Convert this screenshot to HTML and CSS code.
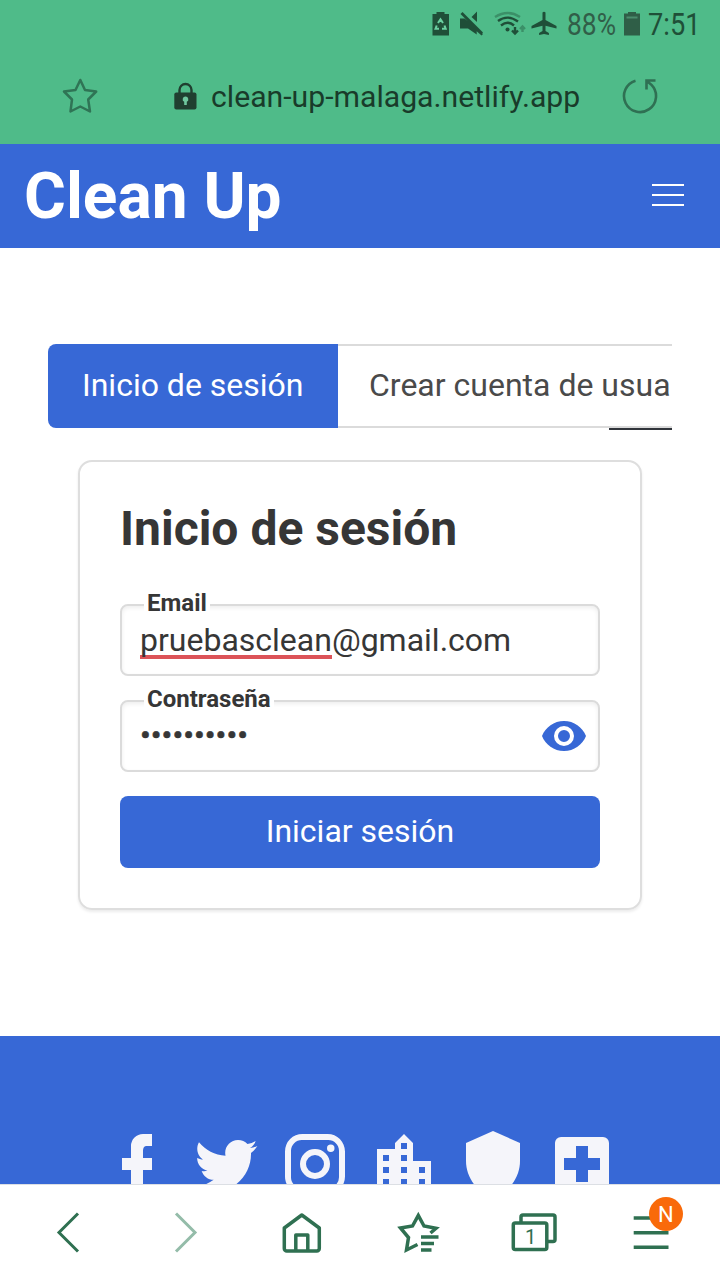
FILE: index.html
```html
<!DOCTYPE html>
<html lang="es">
<head>
<meta charset="utf-8">
<title>Clean Up</title>
<link rel="stylesheet" href="styles.css">
</head>
<body>
<div class="screen">
  <div class="browser-top">
    <div class="status">
      <svg width="288" height="48" viewBox="432 0 288 48">
        <g fill="#1f4f38">
          <path d="M436.500 12h8v2h4.500v21.500h-16.500V14h4z"/>
          <path d="M460 18.500h4.500L483 34l-1.500 1.500-4.800-4.200V34.500L468 28.500h-8zM462.500 12l20.500 20.500-2 2L460.500 14zM477 11.500v10.500l-5.500-5z"/>
          <path d="M542.500 12.500q1.500-1.500 3 0V20L556.500 26v2.500l-11-2.700V31l3.400 2v2l-4.900-1-4.900 1v-2l3.400-2v-5.200l-11 2.700V26l11-6z"/>
          <circle cx="507.500" cy="29.500" r="2"/>
        </g>
        <g fill="none" stroke="#6bd0a1" stroke-width="2"><path d="M438 23l2.500-3.800 2.500 3.800M436.700 25.500l-1.200 3.300h3.500M444.500 25.500l1.200 3.300H442"/></g>
        <g fill="none" stroke="#1f4f38" stroke-width="2.400"><path d="M501 25.500q7-5.500 13 0M498 21q9.500-7 20 .5M515 27v6M512 30.500l3 3 3-3"/><path d="M495 17q13-8 25 0M522.500 32v-5M520 29l2.500-2.500L525 29" opacity=".4"/></g>
        <text x="567" y="35" font-size="30.500" textLength="49" lengthAdjust="spacingAndGlyphs" fill="#315e48">88%</text>
        <path d="M628 12h8v1.500h4V35.500h-16V13.500h4z" fill="#2f5e47"/>
        <path d="M626.500 17.500h11" stroke="#4b8c6d" stroke-width="2"/>
        <text x="648" y="35" font-size="31" textLength="52.500" lengthAdjust="spacingAndGlyphs" fill="#1f4f38">7:51</text>
      </svg>
    </div>
    <div class="address">
      <svg class="star" width="36" height="36" viewBox="0 0 36 36"><path d="M18.300 2l4.700 10 11.200 1.500-8 8L28 33.500 18.300 28.500 8.500 33.500l1.500-12-8-8L13.500 12z" fill="none" stroke="#2f7455" stroke-width="2.500" stroke-linejoin="round"/></svg>
      <svg class="lock" width="23" height="28" viewBox="0 0 23 28"><path d="M5.500 12V8a6 6 0 0112 0v4" fill="none" stroke="#203f30" stroke-width="2.400"/><rect x=".3" y="10.500" width="22.200" height="17" rx="2" fill="#203f30"/><path d="M11.500 14.500a2.800 2.800 0 011.300 5.300V23h-2.600v-3.200a2.800 2.800 0 011.300-5.300z" fill="#6fc79e"/></svg>
      <span class="url">clean-up-malaga.netlify.app</span>
      <svg class="reload" width="36" height="36" viewBox="0 0 36 36"><path d="M13.500 2.700A16 16 0 1029.500 6.900Q27.500 5 24.500 3M24.500 11.500V2.500H33.500" fill="none" stroke="#2f7053" stroke-width="2.600"/></svg>
    </div>
  </div>
  <header class="navbar">
    <span class="brand">Clean Up</span>
    <div class="burger"><i></i><i></i><i></i></div>
  </header>
  <main class="content">
    <div class="tabs">
      <div class="tab active">Inicio de sesión</div>
      <div class="tab other">Crear cuenta de usua</div>
    </div>
    <form class="card">
      <h1>Inicio de sesión</h1>
      <div class="field"><label>Email</label><span class="value"><span class="misspelled">pruebasclean</span>@gmail.com</span></div>
      <div class="field"><label>Contraseña</label><span class="value dots">••••••••••</span>
        <svg class="eye" width="48" height="48" viewBox="0 0 24 24"><path fill="#3768d6" d="M12,9A3,3 0 0,0 9,12A3,3 0 0,0 12,15A3,3 0 0,0 15,12A3,3 0 0,0 12,9M12,17A5,5 0 0,1 7,12A5,5 0 0,1 12,7A5,5 0 0,1 17,12A5,5 0 0,1 12,17M12,4.500C7,4.500 2.730,7.610 1,12C2.730,16.390 7,19.500 12,19.500C17,19.500 21.270,16.390 23,12C21.270,7.610 17,4.500 12,4.500Z"/></svg>
      </div>
      <div class="submit">Iniciar sesión</div>
    </form>
  </main>
  <footer class="footer">
    <svg viewBox="0 0 24 24"><path d="M17,2V6H15C14.310,6 14,6.810 14,7.500V10H17V14H14V22H10V14H7V10H10V6A4,4 0 0,1 14,2H17Z"/></svg>
    <svg viewBox="0 0 24 24"><path d="M22.460,6C21.690,6.350 20.860,6.580 20,6.690C20.880,6.160 21.560,5.320 21.880,4.310C21.050,4.810 20.130,5.160 19.160,5.360C18.370,4.500 17.260,4 16,4C13.650,4 11.730,5.920 11.730,8.290C11.730,8.630 11.770,8.960 11.840,9.270C8.280,9.090 5.110,7.380 3,4.790C2.630,5.420 2.420,6.160 2.420,6.940C2.420,8.430 3.170,9.750 4.330,10.500C3.620,10.500 2.960,10.300 2.380,10V10.030C2.380,12.110 3.860,13.850 5.820,14.240C5.190,14.410 4.530,14.440 3.890,14.310C4.430,16 6,17.260 7.890,17.290C6.370,18.490 4.460,19.200 2.560,19.200L1.540,19.140C3.440,20.360 5.700,21.070 8.120,21.070C16,21.070 20.330,14.530 20.330,8.860V8.300C21.160,7.690 21.880,6.910 22.460,6Z"/></svg>
    <svg viewBox="0 0 24 24"><path d="M7.800,2H16.200C19.400,2 22,4.600 22,7.800V16.200A5.800,5.800 0 0,1 16.200,22H7.800C4.600,22 2,19.400 2,16.200V7.800A5.800,5.800 0 0,1 7.800,2M7.600,4A3.600,3.600 0 0,0 4,7.600V16.400C4,18.390 5.610,20 7.600,20H16.400A3.600,3.600 0 0,0 20,16.400V7.600C20,5.610 18.390,4 16.400,4H7.600M17.250,5.500A1.250,1.250 0 0,1 18.500,6.750A1.250,1.250 0 0,1 17.250,8A1.250,1.250 0 0,1 16,6.750A1.250,1.250 0 0,1 17.250,5.500M12,7A5,5 0 0,1 17,12A5,5 0 0,1 12,17A5,5 0 0,1 7,12A5,5 0 0,1 12,7M12,9A3,3 0 0,0 9,12A3,3 0 0,0 12,15A3,3 0 0,0 15,12A3,3 0 0,0 12,9Z"/></svg>
    <svg viewBox="0 0 24 24"><path d="M19,15H17V13H19M19,19H17V17H19M13,7H11V5H13M13,11H11V9H13M13,15H11V13H13M13,19H11V17H13M7,11H5V9H7M7,15H5V13H7M7,19H5V17H7M15,11V5L12,2L9,5V7H3V21H21V11H15Z"/></svg>
    <svg viewBox="0 0 24 24"><path d="M12,1L3,5V11C3,16.550 6.840,21.740 12,23C17.160,21.740 21,16.550 21,11V5L12,1Z"/></svg>
    <svg viewBox="0 0 24 24"><path d="M18,14H14V18H10V14H6V10H10V6H14V10H18M19,3H5A2,2 0 0,0 3,5V19A2,2 0 0,0 5,21H19A2,2 0 0,0 21,19V5A2,2 0 0,0 19,3Z"/></svg>
  </footer>
  <nav class="toolbar">
    <svg viewBox="0 0 48 48"><path d="M34 4.500L15 23.500l19 19" stroke-width="3"/></svg>
    <svg class="faded" viewBox="0 0 48 48"><path d="M15 4.500l19 19-19 19" stroke-width="3"/></svg>
    <svg viewBox="0 0 48 48"><path d="M24.800 6l17.500 13V39.500a2.500 2.500 0 01-2.500 2.500H9.800A2.500 2.500 0 017.300 39.500V19zM18.800 41.500V26h12v15.500" stroke-linejoin="round"/></svg>
    <svg viewBox="0 0 48 48"><path d="M23.500 35.500L12.500 41 14.500 28.500 6.500 19l12-2L24.300 6.500l5.700 10.500 12 2.300-5.500 4.700"/><path d="M27 28h17.500M27 34.500h13M27 41h10.500"/></svg>
    <svg viewBox="0 0 48 48"><path d="M11 14V8A2 2 0 0113 6h30a2 2 0 012 2V30.500a2 2 0 01-2 2h-5"/><rect x="3.300" y="14" width="33.500" height="26.500" rx="2"/><text x="20.500" y="34.500" text-anchor="middle" font-size="20">1</text></svg>
    <div class="menu"><svg viewBox="0 0 48 48"><path d="M6.700 9h34.800M6.700 23.800h34.800M6.700 38.300h34.800"/></svg><b>N</b></div>
  </nav>
</div>
</body>
</html>
```
FILE: styles.css
```css
* { box-sizing: border-box; }
body { margin: 0; font-family: Roboto, "Liberation Sans", sans-serif; background: #fff; }
svg { display: block; flex: none; }
.screen { width: 720px; height: 1280px; overflow: hidden; display: flex; flex-direction: column; }
.browser-top { height: 144px; background: #4fbb89; }
.status { height: 48px; display: flex; justify-content: flex-end; }
.address { height: 96px; display: flex; align-items: center; padding: 0 62px; color: #193b2a; }
.lock { margin: 0 14px 0 76px; }
.url { width: 370px; padding-top: 2px; font-size: 30.2px; line-height: 36px; white-space: nowrap; }
.reload { margin-left: auto; }
.navbar { height: 104px; background: #3768d6; display: flex; align-items: center; justify-content: space-between; padding: 0 36px 0 24px; }
.brand { padding-top: 1px; color: #fff; font-size: 64px; font-weight: 700; line-height: 103px; }
.burger { display: flex; flex-direction: column; gap: 8px; width: 32px; margin-top: -2px; }
.burger i { height: 2px; background: #fff; }
.content { height: 788px; padding: 96px 48px 0; background: #fff; }
.tabs { height: 86px; display: flex; font-size: 32px; line-height: 82px; white-space: nowrap; overflow: hidden; }
.tab.active { width: 289.5px; height: 84px; background: #3768d6; color: #fff; text-align: center; border-radius: 8px 0 0 8px; }
.tab.other { flex: 1; position: relative; height: 84px; padding-left: 31.5px; line-height: 78px; color: #4a4a4a; border-top: 2px solid #dbdbdb; border-bottom: 2px solid #dbdbdb; }
.tab.other::after { content: ""; position: absolute; right: 0; bottom: -4px; width: 63px; height: 2px; background: #30343a; }
.card { width: 564px; height: 450px; margin: 30px auto 0; padding: 40px; border: 2px solid #dedede; border-radius: 14px; box-shadow: 0 2px 3px rgba(0,0,0,.08); }
h1 { margin: 0 0 48px; font-size: 48px; line-height: 54px; font-weight: 700; color: #363636; }
.field { position: relative; height: 72px; margin-bottom: 24px; padding: 0 10px 0 18px; border: 2px solid #dbdbdb; border-radius: 8px; display: flex; align-items: center; justify-content: space-between; box-shadow: inset 0 2px 4px rgba(0,0,0,.07); }
.field label { position: absolute; left: 22px; top: -18px; padding: 0 3px; background: #fff; font-size: 24px; line-height: 30px; font-weight: 700; color: #363636; }
.value { font-size: 32px; line-height: 40px; color: #363636; }
.misspelled { display: inline-block; height: 40px; background: linear-gradient(#dc5358, #dc5358) 0 35px / 100% 4px no-repeat; }
.dots { padding-bottom: 2px; -webkit-text-stroke: .6px #363636; }
.submit { height: 72px; border-radius: 8px; background: #3768d6; color: #fff; text-align: center; font-size: 32px; line-height: 70px; }
.footer { height: 148px; padding: 92px 0 0 101.3px; background: #3768d6; display: flex; gap: 17px; overflow: hidden; }
.footer svg { width: 72px; height: 72px; fill: #f5f5fa; }
.toolbar { height: 96px; padding-left: 44px; background: #fff; border-top: 1px solid #dcdfe4; display: flex; align-items: center; gap: 68.6px; }
.toolbar svg { width: 48px; height: 48px; fill: none; stroke: #2f7051; stroke-width: 3.5; }
.toolbar svg text { fill: #2f7051; stroke: none; }
.toolbar .faded { stroke: #94bca9; }
.menu { position: relative; }
.menu b { position: absolute; left: 22px; top: -12px; width: 34px; height: 34px; border-radius: 50%; background: #f96a0a; color: #fff; font-size: 22px; font-weight: 400; line-height: 35px; text-align: center; }
```
